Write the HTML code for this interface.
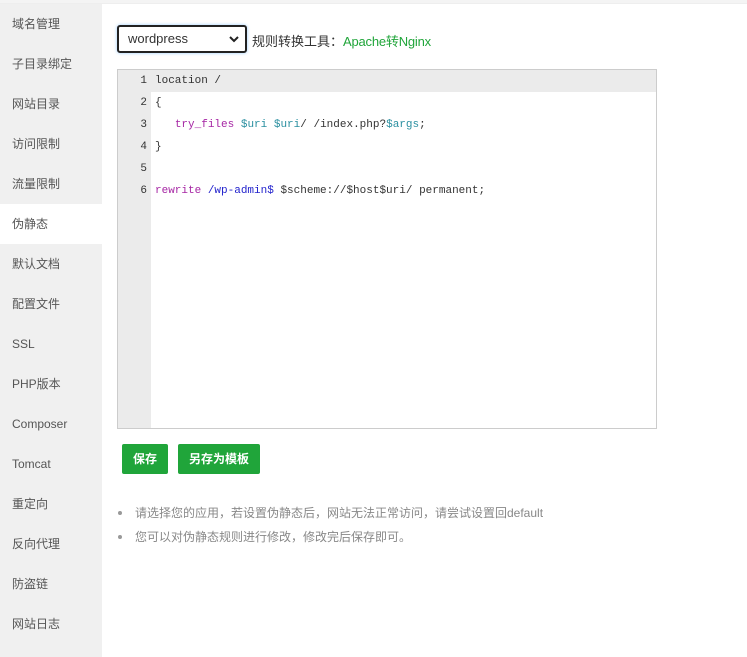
<!DOCTYPE html>
<html><head><meta charset="utf-8"><style>
*{margin:0;padding:0;box-sizing:border-box}
body{width:747px;height:657px;background:#fff;font-family:"Liberation Sans","Noto Sans CJK SC",sans-serif;font-size:12px;color:#333;position:relative;overflow:hidden}
.top{position:absolute;left:0;top:0;width:747px;height:4px;background:#f4f4f4;border-bottom:1px solid #eee}
.side{position:absolute;left:0;top:4px;width:102px;height:653px;background:#f0f0f0}
.side div{height:40px;line-height:40px;padding-left:12px;font-size:12px;color:#555}
.side div.a{background:#fff}
.sel{position:absolute;left:117px;top:25px;width:130px;height:28px;border:2px solid #222;border-radius:3px;box-shadow:0 0 3px #9cf;padding-left:9px;line-height:24px;font-size:13px;color:#333}
.sel svg{position:absolute;right:5px;top:8px}
.lab{position:absolute;left:252px;top:31px;font-size:13px;color:#333}
.lab b{color:#20a53a;font-weight:normal;letter-spacing:-0.2px}
.ed{position:absolute;left:117px;top:69px;width:540px;height:360px;border:1px solid #ccc;background:#fff}
.gut{position:absolute;left:0;top:0;width:33px;height:358px;background:#ebebeb}
.hl{position:absolute;left:0;top:0;width:538px;height:22px;background:#ebebeb}
.ln{position:absolute;left:0;width:29px;text-align:right;font-family:"Liberation Mono",monospace;font-size:11px;color:#333;line-height:22px}
.cd{position:absolute;left:37px;font-family:"Liberation Mono",monospace;font-size:11px;line-height:22px;color:#333;white-space:pre}
.k{color:#a626a4}.v{color:#2a8fa0}.p{color:#2222cc}
.btn{position:absolute;top:444px;height:30px;line-height:30px;background:#20a53a;color:#fff;border-radius:2px;font-size:12px;text-align:center;font-weight:bold}
.tip{position:absolute;left:135px;font-size:12px;color:#888}
.tip:before{content:"";position:absolute;left:-17px;top:7px;width:4px;height:4px;border-radius:2px;background:#999}
</style></head><body>
<div class="top"></div>
<div class="side">
<div>域名管理</div><div>子目录绑定</div><div>网站目录</div><div>访问限制</div><div>流量限制</div><div class="a">伪静态</div><div>默认文档</div><div>配置文件</div><div>SSL</div><div>PHP版本</div><div>Composer</div><div>Tomcat</div><div>重定向</div><div>反向代理</div><div>防盗链</div><div>网站日志</div>
</div>
<div class="sel">wordpress<svg width="12" height="8" viewBox="0 0 12 8"><path d="M2 2l4 4 4-4" stroke="#222" stroke-width="2" fill="none"/></svg></div>
<div class="lab">规则转换工具：<b>Apache转Nginx</b></div>
<div class="ed"><div class="gut"></div><div class="hl"></div>
<div class="ln" style="top:0">1</div><div class="ln" style="top:22px">2</div><div class="ln" style="top:44px">3</div><div class="ln" style="top:66px">4</div><div class="ln" style="top:88px">5</div><div class="ln" style="top:110px">6</div>
<div class="cd" style="top:0">location /</div>
<div class="cd" style="top:22px">{</div>
<div class="cd" style="top:44px">   <span class="k">try_files</span> <span class="v">$uri</span> <span class="v">$uri</span>/ /index.php?<span class="v">$args</span>;</div>
<div class="cd" style="top:66px">}</div>
<div class="cd" style="top:110px"><span class="k">rewrite</span> <span class="p">/wp-admin$</span> $scheme://$host$uri/ permanent;</div>
</div>
<div class="btn" style="left:122px;width:46px">保存</div>
<div class="btn" style="left:178px;width:82px">另存为模板</div>
<div class="tip" style="top:504px">请选择您的应用，若设置伪静态后，网站无法正常访问，请尝试设置回default</div>
<div class="tip" style="top:528px">您可以对伪静态规则进行修改，修改完后保存即可。</div>
</body></html>
